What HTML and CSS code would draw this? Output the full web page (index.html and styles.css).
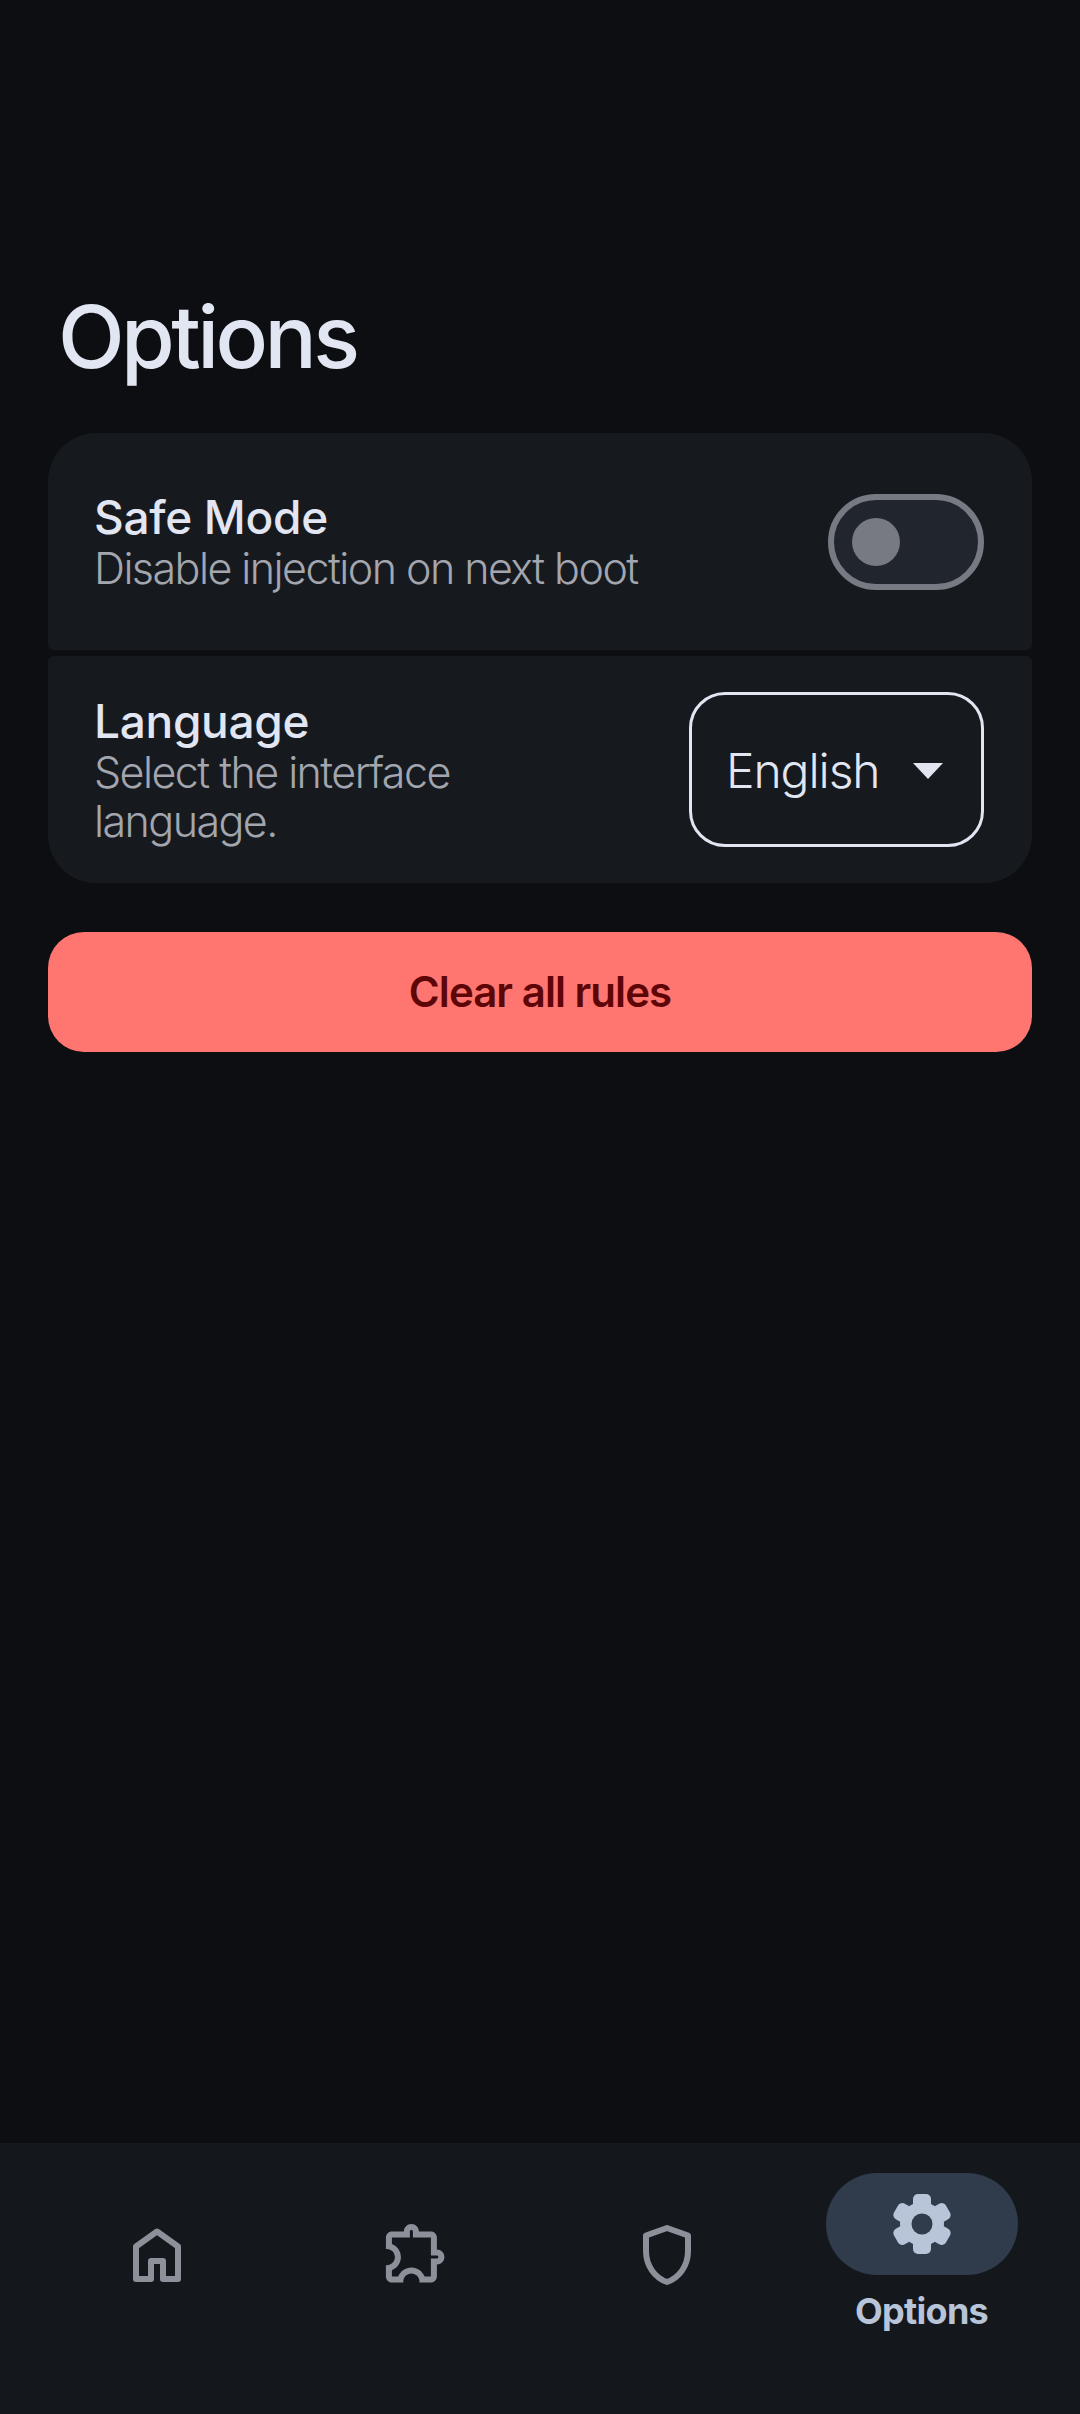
FILE: index.html
```html
<!DOCTYPE html>
<html lang="en">
<head>
    <meta charset="UTF-8">
    <meta name="viewport" content="width=device-width, initial-scale=1.0">
    <title>Options</title>
    <link rel="stylesheet" href="styles.css">
</head>
<body>
    <main class="content">
        <h1 class="page-title">Options</h1>

        <!-- Settings list -->
        <section class="settings">
            <div class="row row-toggle">
                <div class="row-text">
                    <div class="row-title">Safe Mode</div>
                    <div class="row-sub">Disable injection on next boot</div>
                </div>
                <div class="switch"><span class="switch-thumb"></span></div>
            </div>
            <div class="row row-select">
                <div class="row-text row-text-narrow">
                    <div class="row-title">Language</div>
                    <div class="row-sub">Select the interface language.</div>
                </div>
                <div class="select">
                    <span>English</span>
                    <span class="select-arrow"></span>
                </div>
            </div>
        </section>

        <button class="danger-btn">Clear all rules</button>
    </main>

    <!-- Bottom navigation -->
    <nav class="bottom-nav">
        <a class="nav-item">
            <svg class="nav-icon" viewBox="0 0 72 72" width="72" height="72">
                <path class="nav-stroke" d="M15 60H30V42H42V60H57V27.5L36 12.5L15 27.5Z"/>
            </svg>
        </a>
        <a class="nav-item">
            <svg class="nav-icon" viewBox="-1.3 0.8 24 24" width="72" height="72">
                <path class="nav-fill" d="M10.5 4.5c.28 0 .5.22.5.5v2h6v6h2c.28 0 .5.22.5.5s-.22.5-.5.5h-2v6h-2.12c-.68-1.75-2.39-3-4.38-3s-3.7 1.25-4.38 3H4v-2.12c1.75-.68 3-2.39 3-4.38 0-1.99-1.24-3.7-2.99-4.38L4 7h6V5c0-.28.22-.5.5-.5m0-2C9.12 2.5 8 3.62 8 5H4c-1.1 0-1.99.9-1.99 2v3.8h.29c1.49 0 2.7 1.21 2.7 2.7s-1.21 2.7-2.7 2.7H2V20c0 1.1.9 2 2 2h3.8v-.3c0-1.49 1.21-2.7 2.7-2.7s2.7 1.21 2.7 2.7v.3H17c1.1 0 2-.9 2-2v-4c1.38 0 2.5-1.12 2.5-2.5S20.38 11 19 11V7c0-1.1-.9-2-2-2h-4c0-1.38-1.12-2.5-2.5-2.5z"/>
            </svg>
        </a>
        <a class="nav-item">
            <svg class="nav-icon" viewBox="0 0 72 72" width="72" height="72">
                <path class="nav-stroke" d="M36 9L15 16.5V32C15 47 24 59 36 63C48 59 57 47 57 32V16.5Z"/>
            </svg>
        </a>
        <a class="nav-item nav-item-active">
            <span class="nav-pill">
                <svg viewBox="0 0 72 72" width="72" height="72">
                    <g class="gear" transform="translate(36 36)">
                        <circle r="22"/>
                        <rect x="-9" y="-30" width="18" height="60" rx="5"/>
                        <rect x="-9" y="-30" width="18" height="60" rx="5" transform="rotate(60)"/>
                        <rect x="-9" y="-30" width="18" height="60" rx="5" transform="rotate(120)"/>
                        <circle class="gear-hole" r="10.5"/>
                    </g>
                </svg>
            </span>
            <span class="nav-label">Options</span>
        </a>
    </nav>
</body>
</html>
```

FILE: styles.css
```css
body {
    margin: 0;
    width: 1080px;
    height: 2414px;
    display: flex;
    flex-direction: column;
    overflow: hidden;
    background-color: #0c0e12;
    color: #e2e6f2;
    font-family: Inter, "Noto Sans", sans-serif;
}
.content {
    flex: 1;
    padding: 282px 48px 0;
}
.page-title {
    margin: 0 0 42px 10px;
    font-size: 87px;
    line-height: 109px;
    font-weight: 500;
    letter-spacing: -3.6px;
}

/* Settings card */
.settings {
    display: flex;
    flex-direction: column;
    gap: 6px;
}
.row {
    display: flex;
    align-items: center;
    justify-content: space-between;
    background-color: #161a1f;
    border-radius: 6px;
}
.row-toggle {
    padding: 57px 48px 57px 46px;
    border-radius: 48px 48px 6px 6px;
}
.row-select {
    padding: 36px 48px 36px 46px;
    border-radius: 6px 6px 48px 48px;
}
.row-text-narrow {
    max-width: 400px;
}
.row-title {
    font-size: 46px;
    line-height: 54px;
    font-weight: 500;
    letter-spacing: -0.3px;
}
.row-sub {
    font-size: 43px;
    line-height: 49px;
    font-weight: 300;
    color: #a3a6ae;
    letter-spacing: -1.55px;
}

/* Switch */
.switch {
    width: 156px;
    height: 96px;
    box-sizing: border-box;
    display: flex;
    align-items: center;
    padding-left: 18px;
    border: 6px solid #777a82;
    border-radius: 48px;
    background-color: #21252d;
}
.switch-thumb {
    width: 48px;
    height: 48px;
    border-radius: 50%;
    background-color: #777a82;
}

/* Dropdown */
.select {
    width: 295px;
    height: 155px;
    box-sizing: border-box;
    display: flex;
    align-items: center;
    justify-content: space-between;
    padding: 2px 38px 0 34px;
    border: 3px solid #e2e6f2;
    border-radius: 36px;
    font-size: 48px;
    font-weight: 300;
    letter-spacing: -1.1px;
}
.select-arrow {
    width: 0;
    height: 0;
    border-left: 15px solid transparent;
    border-right: 15px solid transparent;
    border-top: 16px solid #e2e6f2;
}

.danger-btn {
    display: block;
    width: 100%;
    height: 120px;
    margin-top: 49px;
    padding: 0 0 2px;
    border: none;
    border-radius: 36px;
    background-color: #ff7570;
    color: #5e0508;
    font-family: inherit;
    font-size: 42px;
    font-weight: 600;
    letter-spacing: -0.95px;
}

/* Bottom nav */
.bottom-nav {
    height: 271px;
    display: grid;
    grid-template-columns: repeat(4, 1fr);
    padding: 30px 31px 0 29px;
    box-sizing: border-box;
    background-color: #14181d;
}
.nav-item {
    display: flex;
    flex-direction: column;
    align-items: center;
    padding-top: 46px;
}
.nav-item-active {
    padding-top: 0;
}
.nav-icon {
    display: block;
}
.nav-stroke {
    fill: none;
    stroke: #8d9099;
    stroke-width: 6;
    stroke-linejoin: round;
}
.nav-fill {
    fill: #8d9099;
}
.nav-pill {
    width: 192px;
    height: 102px;
    display: flex;
    align-items: center;
    justify-content: center;
    border-radius: 51px;
    background-color: #303c4c;
}
.gear {
    fill: #b8c4d8;
}
.gear-hole {
    fill: #303c4c;
}
.nav-label {
    margin-top: 14px;
    font-size: 36px;
    line-height: 44px;
    font-weight: 700;
    letter-spacing: -0.7px;
    color: #b8c4d8;
}
```
